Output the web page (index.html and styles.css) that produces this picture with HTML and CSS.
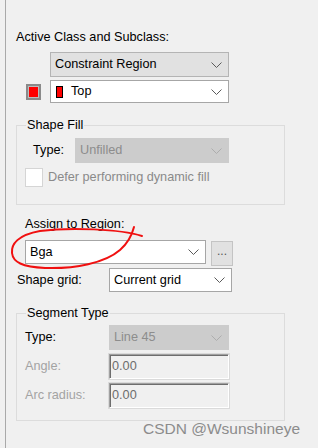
FILE: index.html
```html
<!DOCTYPE html>
<html lang="en">
<head>
    <meta charset="UTF-8">
    <meta name="viewport" content="width=device-width, initial-scale=1.0">
    <title>Options</title>
    <link rel="stylesheet" href="styles.css">
</head>
<body>
    <div class="panel">
        <div class="label title-label">Active Class and Subclass:</div>
        <div class="combo combo--gray class-combo">
            <span class="combo__text">Constraint Region</span>
            <svg class="chevron" width="11" height="6" viewBox="0 0 11 6"><polyline points="0.5,0.5 5.5,5.5 10.5,0.5"/></svg>
        </div>
        <div class="row subclass-row">
            <span class="swatch"><span class="swatch__fill"></span></span>
            <div class="combo subclass-combo">
                <span class="mini-swatch"></span>
                <span class="combo__text">Top</span>
                <svg class="chevron" width="11" height="6" viewBox="0 0 11 6"><polyline points="0.5,0.5 5.5,5.5 10.5,0.5"/></svg>
            </div>
        </div>

        <div class="group fill-group">
            <div class="group__title">Shape Fill</div>
            <div class="row fill-type-row">
                <span class="label fill-type-label">Type:</span>
                <div class="combo combo--disabled fill-combo">
                    <span class="combo__text">Unfilled</span>
                    <svg class="chevron" width="11" height="6" viewBox="0 0 11 6"><polyline points="0.5,0.5 5.5,5.5 10.5,0.5"/></svg>
                </div>
            </div>
            <div class="row check-row">
                <span class="checkbox"></span>
                <span class="label defer-label">Defer performing dynamic fill</span>
            </div>
        </div>

        <div class="label region-label">Assign to Region:</div>
        <div class="row region-row">
            <div class="combo region-combo">
                <span class="combo__text">Bga</span>
                <svg class="chevron" width="11" height="6" viewBox="0 0 11 6"><polyline points="0.5,0.5 5.5,5.5 10.5,0.5"/></svg>
            </div>
            <button class="dots" type="button">...</button>
        </div>
        <div class="row grid-row">
            <span class="label grid-label">Shape grid:</span>
            <div class="combo grid-combo">
                <span class="combo__text">Current grid</span>
                <svg class="chevron" width="11" height="6" viewBox="0 0 11 6"><polyline points="0.5,0.5 5.5,5.5 10.5,0.5"/></svg>
            </div>
        </div>

        <div class="group segment-group">
            <div class="group__title">Segment Type</div>
            <div class="row seg-row seg-row--first">
                <span class="label seg-label">Type:</span>
                <div class="combo combo--disabled seg-field">
                    <span class="combo__text">Line 45</span>
                    <svg class="chevron" width="11" height="6" viewBox="0 0 11 6"><polyline points="0.5,0.5 5.5,5.5 10.5,0.5"/></svg>
                </div>
            </div>
            <div class="row seg-row">
                <span class="label label--disabled seg-label">Angle:</span>
                <div class="edit seg-field">0.00</div>
            </div>
            <div class="row seg-row">
                <span class="label label--disabled seg-label">Arc radius:</span>
                <div class="edit seg-field">0.00</div>
            </div>
        </div>
    </div>

    <svg class="scribble" width="318" height="448" viewBox="0 0 318 448">
        <path d="M142,236 C120,229 70,227 40,231 C18,235 11,244 12,253 C13,262 22,267 45,268 C75,269 105,263 120,250 C128,243 132,235 134,227"/>
    </svg>

    <div class="watermark">CSDN @Wsunshineye</div>
</body>
</html>
```

FILE: styles.css
```css
body {
  margin: 0;
  background: #f0f0f0;
  font: 12.7px/15px "Liberation Sans", Arial, sans-serif;
  color: #000;
}

.panel {
  margin-left: 5px;
  border-left: 1px solid #a9a9a9;
  height: 448px;
  box-sizing: border-box;
  padding-top: 30px;
}

.row {
  display: flex;
  align-items: center;
}

.label {
  white-space: nowrap;
}

.label--disabled {
  color: #a3a3a3;
}

.title-label {
  margin-left: 10px;
}

/* combo boxes */
.combo {
  position: relative;
  display: flex;
  align-items: center;
  box-sizing: border-box;
  height: 24px;
  background: #fff;
  border: 1px solid #a6a6a6;
  padding-left: 4px;
}

.combo--gray {
  background: #e1e1e1;
  border-color: #b4b4b4;
}

.combo--disabled {
  background: #cccccc;
  border-color: #cccccc;
  color: #8d8d8d;
}

.combo__text {
  flex: 1;
}

.chevron {
  margin-right: 6px;
  fill: none;
  stroke: #5a5a5a;
  stroke-width: 1;
}

.combo--disabled .chevron {
  stroke: #adadad;
}

.class-combo {
  margin: 7px 0 0 44px;
  width: 179px;
  height: 25px;
}

.subclass-row {
  margin-top: 3px;
}

.swatch {
  display: flex;
  align-items: center;
  justify-content: center;
  box-sizing: border-box;
  margin-left: 20px;
  width: 15px;
  height: 16px;
  border: 2px solid #8a8a8a;
  background: #bdbdbd;
}

.swatch__fill {
  width: 9px;
  height: 10px;
  background: #ff0000;
}

.subclass-combo {
  margin-left: 9px;
  width: 179px;
  height: 23px;
  padding-left: 5px;
}

.mini-swatch {
  box-sizing: border-box;
  width: 7px;
  height: 12px;
  margin-right: 8px;
  border: 1px solid #000;
  background: #ff0000;
}

/* group boxes */
.group {
  margin-left: 10px;
  width: 269px;
  box-sizing: border-box;
  border: 1px solid #dcdcdc;
}

.group__title {
  width: fit-content;
  margin: -8px 0 0 9px;
  padding: 0 1px;
  background: #f0f0f0;
}

.fill-group {
  margin-top: 22px;
  height: 80px;
}

.fill-type-row {
  margin-top: 5px;
}

.fill-type-label {
  margin-left: 16px;
  width: 42px;
}

.fill-combo {
  width: 154px;
  height: 25px;
}

.check-row {
  margin-top: 5px;
}

.checkbox {
  box-sizing: border-box;
  margin: 0 5px 0 8px;
  width: 18px;
  height: 19px;
  background: #fff;
  border: 1px solid #d5d5d5;
}

.defer-label {
  color: #8a8a8a;
}

.region-label {
  margin: 12px 0 0 19px;
}

.region-row {
  margin-top: 8px;
  align-items: flex-start;
}

.region-combo {
  margin-left: 19px;
  width: 181px;
}

.dots {
  margin: 1px 0 0 5px;
  width: 22px;
  height: 25px;
  padding: 0 0 5px;
  box-sizing: border-box;
  background: #e1e1e1;
  border: 1px solid #c4c4c4;
  font: 12px/12px "Liberation Sans", Arial, sans-serif;
  color: #555;
}

.grid-row {
  margin-top: 2px;
}

.grid-label {
  margin-left: 11px;
  width: 92px;
}

.grid-combo {
  width: 123px;
}

.segment-group {
  margin-top: 21px;
  height: 108px;
}

.seg-row {
  margin-top: 4px;
}

.seg-label {
  margin-left: 8px;
  width: 84px;
}

.seg-field {
  width: 120px;
  height: 25px;
}

.edit {
  box-sizing: border-box;
  display: flex;
  align-items: center;
  padding-left: 2px;
  background: #f0f0f0;
  border: 1px solid;
  border-color: #a0a0a0 #ffffff #ffffff #a0a0a0;
  box-shadow: 0 0 0 1px #dadada, inset 1px 1px 0 #6d6d6d;
  color: #6d6d6d;
}

/* annotation drawn over the screenshot */
.scribble {
  position: absolute;
  left: 0;
  top: 0;
  fill: none;
  stroke: #f01010;
  stroke-width: 2;
  stroke-linecap: round;
}

.watermark {
  position: absolute;
  left: 143px;
  top: 420px;
  font: 15.5px/18px "Liberation Sans", Arial, sans-serif;
  color: #8c8c8c;
  white-space: nowrap;
}
```
